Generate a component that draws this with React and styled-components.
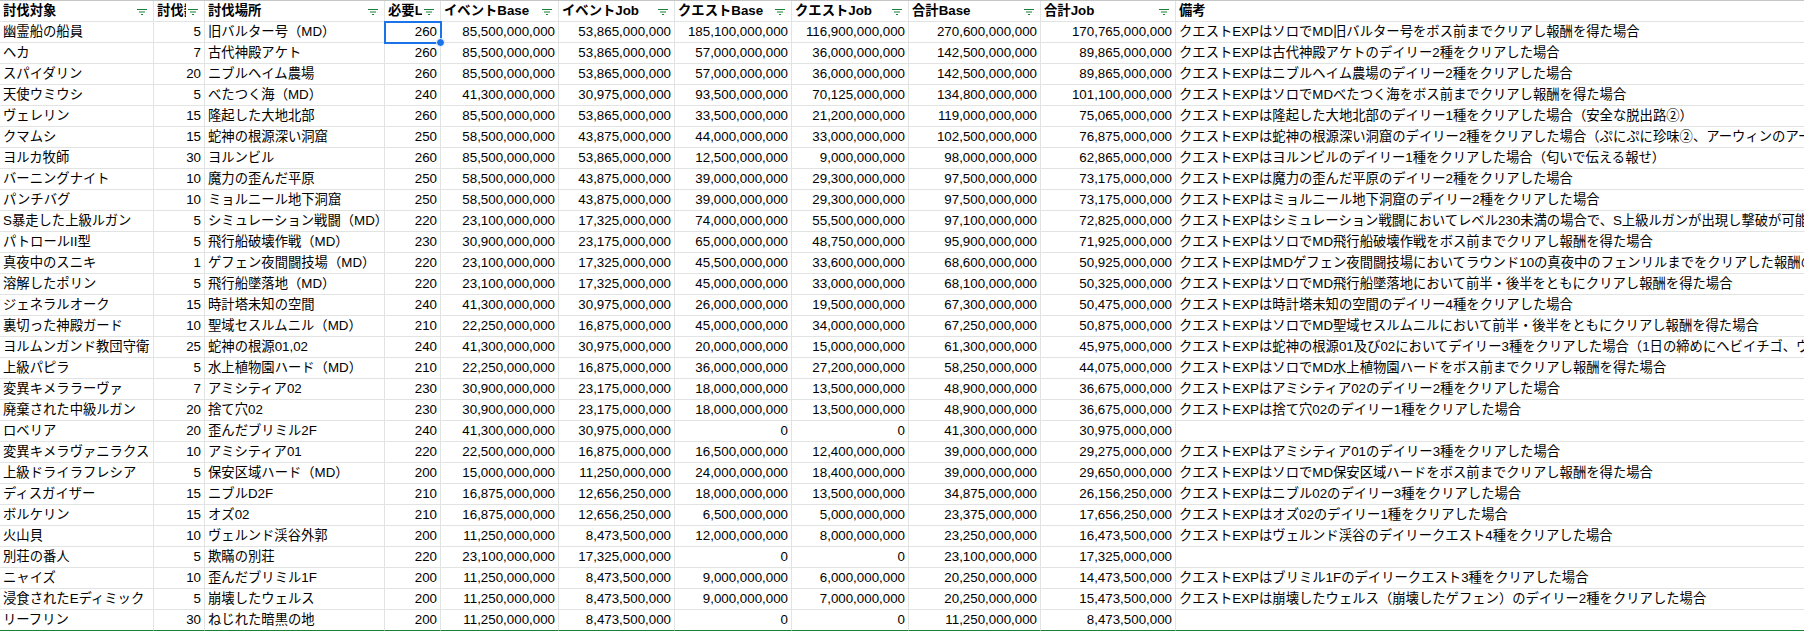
import React from 'react';
import styled, { createGlobalStyle } from 'styled-components';

const GlobalStyle = createGlobalStyle`
  body {
    margin: 0;
    background: #fff;
    overflow: hidden;
  }
`;

const widths = [154, 51, 180, 56, 118, 116, 117, 117, 132, 135, 900];

const headers = [
  '討伐対象', '討伐数', '討伐場所', '必要Lv', 'イベントBase', 'イベントJob',
  'クエストBase', 'クエストJob', '合計Base', '合計Job', '備考',
];

// 名前, 討伐数, 場所, Lv, イベントBase, イベントJob, クエストBase, クエストJob, 合計Base, 合計Job, 備考
const rows = [
  ['幽霊船の船員', 5, '旧バルター号（MD）', 260, 85500000000, 53865000000, 185100000000, 116900000000, 270600000000, 170765000000, 'クエストEXPはソロでMD旧バルター号をボス前までクリアし報酬を得た場合'],
  ['ヘカ', 7, '古代神殿アケト', 260, 85500000000, 53865000000, 57000000000, 36000000000, 142500000000, 89865000000, 'クエストEXPは古代神殿アケトのデイリー2種をクリアした場合'],
  ['スパイダリン', 20, 'ニブルヘイム農場', 260, 85500000000, 53865000000, 57000000000, 36000000000, 142500000000, 89865000000, 'クエストEXPはニブルヘイム農場のデイリー2種をクリアした場合'],
  ['天使ウミウシ', 5, 'べたつく海（MD）', 240, 41300000000, 30975000000, 93500000000, 70125000000, 134800000000, 101100000000, 'クエストEXPはソロでMDべたつく海をボス前までクリアし報酬を得た場合'],
  ['ヴェレリン', 15, '隆起した大地北部', 260, 85500000000, 53865000000, 33500000000, 21200000000, 119000000000, 75065000000, 'クエストEXPは隆起した大地北部のデイリー1種をクリアした場合（安全な脱出路②）'],
  ['クマムシ', 15, '蛇神の根源深い洞窟', 250, 58500000000, 43875000000, 44000000000, 33000000000, 102500000000, 76875000000, 'クエストEXPは蛇神の根源深い洞窟のデイリー2種をクリアした場合（ぷにぷに珍味②、アーウィンのアーティファクト②）'],
  ['ヨルカ牧師', 30, 'ヨルンビル', 260, 85500000000, 53865000000, 12500000000, 9000000000, 98000000000, 62865000000, 'クエストEXPはヨルンビルのデイリー1種をクリアした場合（匂いで伝える報せ）'],
  ['バーニングナイト', 10, '魔力の歪んだ平原', 250, 58500000000, 43875000000, 39000000000, 29300000000, 97500000000, 73175000000, 'クエストEXPは魔力の歪んだ平原のデイリー2種をクリアした場合'],
  ['パンチバグ', 10, 'ミョルニール地下洞窟', 250, 58500000000, 43875000000, 39000000000, 29300000000, 97500000000, 73175000000, 'クエストEXPはミョルニール地下洞窟のデイリー2種をクリアした場合'],
  ['S暴走した上級ルガン', 5, 'シミュレーション戦闘（MD）', 220, 23100000000, 17325000000, 74000000000, 55500000000, 97100000000, 72825000000, 'クエストEXPはシミュレーション戦闘においてレベル230未満の場合で、S上級ルガンが出現し撃破が可能な場合'],
  ['パトロールII型', 5, '飛行船破壊作戦（MD）', 230, 30900000000, 23175000000, 65000000000, 48750000000, 95900000000, 71925000000, 'クエストEXPはソロでMD飛行船破壊作戦をボス前までクリアし報酬を得た場合'],
  ['真夜中のスニキ', 1, 'ゲフェン夜間闘技場（MD）', 220, 23100000000, 17325000000, 45500000000, 33600000000, 68600000000, 50925000000, 'クエストEXPはMDゲフェン夜間闘技場においてラウンド10の真夜中のフェンリルまでをクリアした報酬の場合'],
  ['溶解したポリン', 5, '飛行船墜落地（MD）', 220, 23100000000, 17325000000, 45000000000, 33000000000, 68100000000, 50325000000, 'クエストEXPはソロでMD飛行船墜落地において前半・後半をともにクリアし報酬を得た場合'],
  ['ジェネラルオーク', 15, '時計塔未知の空間', 240, 41300000000, 30975000000, 26000000000, 19500000000, 67300000000, 50475000000, 'クエストEXPは時計塔未知の空間のデイリー4種をクリアした場合'],
  ['裏切った神殿ガード', 10, '聖域セスルムニル（MD）', 210, 22250000000, 16875000000, 45000000000, 34000000000, 67250000000, 50875000000, 'クエストEXPはソロでMD聖域セスルムニルにおいて前半・後半をともにクリアし報酬を得た場合'],
  ['ヨルムンガンド教団守衛', 25, '蛇神の根源01,02', 240, 41300000000, 30975000000, 20000000000, 15000000000, 61300000000, 45975000000, 'クエストEXPは蛇神の根源01及び02においてデイリー3種をクリアした場合（1日の締めにヘビイチゴ、ヴァナルガンドの牙）'],
  ['上級パピラ', 5, '水上植物園ハード（MD）', 210, 22250000000, 16875000000, 36000000000, 27200000000, 58250000000, 44075000000, 'クエストEXPはソロでMD水上植物園ハードをボス前までクリアし報酬を得た場合'],
  ['変異キメララーヴァ', 7, 'アミシティア02', 230, 30900000000, 23175000000, 18000000000, 13500000000, 48900000000, 36675000000, 'クエストEXPはアミシティア02のデイリー2種をクリアした場合'],
  ['廃棄された中級ルガン', 20, '捨て穴02', 230, 30900000000, 23175000000, 18000000000, 13500000000, 48900000000, 36675000000, 'クエストEXPは捨て穴02のデイリー1種をクリアした場合'],
  ['ロベリア', 20, '歪んだブリミル2F', 240, 41300000000, 30975000000, 0, 0, 41300000000, 30975000000, ''],
  ['変異キメラヴァニラクス', 10, 'アミシティア01', 220, 22500000000, 16875000000, 16500000000, 12400000000, 39000000000, 29275000000, 'クエストEXPはアミシティア01のデイリー3種をクリアした場合'],
  ['上級ドライラフレシア', 5, '保安区域ハード（MD）', 200, 15000000000, 11250000000, 24000000000, 18400000000, 39000000000, 29650000000, 'クエストEXPはソロでMD保安区域ハードをボス前までクリアし報酬を得た場合'],
  ['ディスガイザー', 15, 'ニブルD2F', 210, 16875000000, 12656250000, 18000000000, 13500000000, 34875000000, 26156250000, 'クエストEXPはニブル02のデイリー3種をクリアした場合'],
  ['ボルケリン', 15, 'オズ02', 210, 16875000000, 12656250000, 6500000000, 5000000000, 23375000000, 17656250000, 'クエストEXPはオズ02のデイリー1種をクリアした場合'],
  ['火山貝', 10, 'ヴェルンド渓谷外郭', 200, 11250000000, 8473500000, 12000000000, 8000000000, 23250000000, 16473500000, 'クエストEXPはヴェルンド渓谷のデイリークエスト4種をクリアした場合'],
  ['別荘の番人', 5, '欺瞞の別荘', 220, 23100000000, 17325000000, 0, 0, 23100000000, 17325000000, ''],
  ['ニャイズ', 10, '歪んだブリミル1F', 200, 11250000000, 8473500000, 9000000000, 6000000000, 20250000000, 14473500000, 'クエストEXPはブリミル1Fのデイリークエスト3種をクリアした場合'],
  ['浸食されたEディミック', 5, '崩壊したウェルス', 200, 11250000000, 8473500000, 9000000000, 7000000000, 20250000000, 15473500000, 'クエストEXPは崩壊したウェルス（崩壊したゲフェン）のデイリー2種をクリアした場合'],
  ['リーフリン', 30, 'ねじれた暗黒の地', 200, 11250000000, 8473500000, 0, 0, 11250000000, 8473500000, ''],
];

const Sheet = styled.div`
  display: grid;
  grid-template-columns: ${widths.map((w) => `${w}px`).join(' ')};
  grid-auto-rows: 21px;
  border-top: 1px solid #c4c7c5;
  font-family: "Liberation Sans", "Noto Sans CJK JP", sans-serif;
  font-size: 13.33px;
  color: #000;
  width: max-content;
`;

const HeaderCell = styled.div`
  display: flex;
  align-items: center;
  gap: 2px;
  padding: 0 6px 0 3px;
  border-right: 1px solid #e2e3e3;
  border-bottom: 1px solid #e2e3e3;
  font-weight: bold;
  white-space: nowrap;
  min-width: 0;
`;

const HeaderText = styled.span`
  flex: 1;
  overflow: hidden;
  line-height: 20px;
`;

const FilterIcon = styled.svg`
  flex: none;
  width: 10px;
  height: 6px;
  margin-top: 2px;
`;

const Cell = styled.div`
  position: relative;
  padding: 0 3px;
  line-height: 20px;
  white-space: nowrap;
  overflow: ${(p) => (p.$overflow ? 'visible' : 'hidden')};
  text-align: ${(p) => (p.$num ? 'right' : 'left')};
  border-right: 1px solid #e2e3e3;
  border-bottom: 1px solid ${(p) => (p.$last ? '#188038' : '#e2e3e3')};
  min-width: 0;

  ${(p) => p.$selected && `
    z-index: 2;
    outline: 2px solid #1a73e8;
    outline-offset: -1px;
    &::after {
      content: '';
      position: absolute;
      right: -5px;
      bottom: -5px;
      width: 7px;
      height: 7px;
      border-radius: 50%;
      background: #1a73e8;
      border: 1px solid #fff;
    }
  `}
`;

const Filter = () => (
  <FilterIcon viewBox="0 0 10 6">
    <rect x="0" y="0" width="10" height="1" fill="#188038" />
    <rect x="2" y="2.5" width="6" height="1" fill="#188038" />
    <rect x="4" y="5" width="2" height="1" fill="#188038" />
  </FilterIcon>
);

const fmt = (v) => (typeof v === 'number' ? v.toLocaleString('en-US') : v);

export default function App() {
  return (
    <>
      <GlobalStyle />
      <Sheet>
        {headers.map((h, i) => (
          <HeaderCell key={h}>
            <HeaderText>{h}</HeaderText>
            {i < headers.length - 1 && <Filter />}
          </HeaderCell>
        ))}
        {rows.map((row, r) =>
          row.map((v, c) => (
            <Cell
              key={`${r}-${c}`}
              $num={typeof v === 'number'}
              $last={r === rows.length - 1}
              $selected={r === 0 && c === 3}
              $overflow={r === 0 && c === 3}
            >
              {fmt(v)}
            </Cell>
          ))
        )}
      </Sheet>
    </>
  );
}
